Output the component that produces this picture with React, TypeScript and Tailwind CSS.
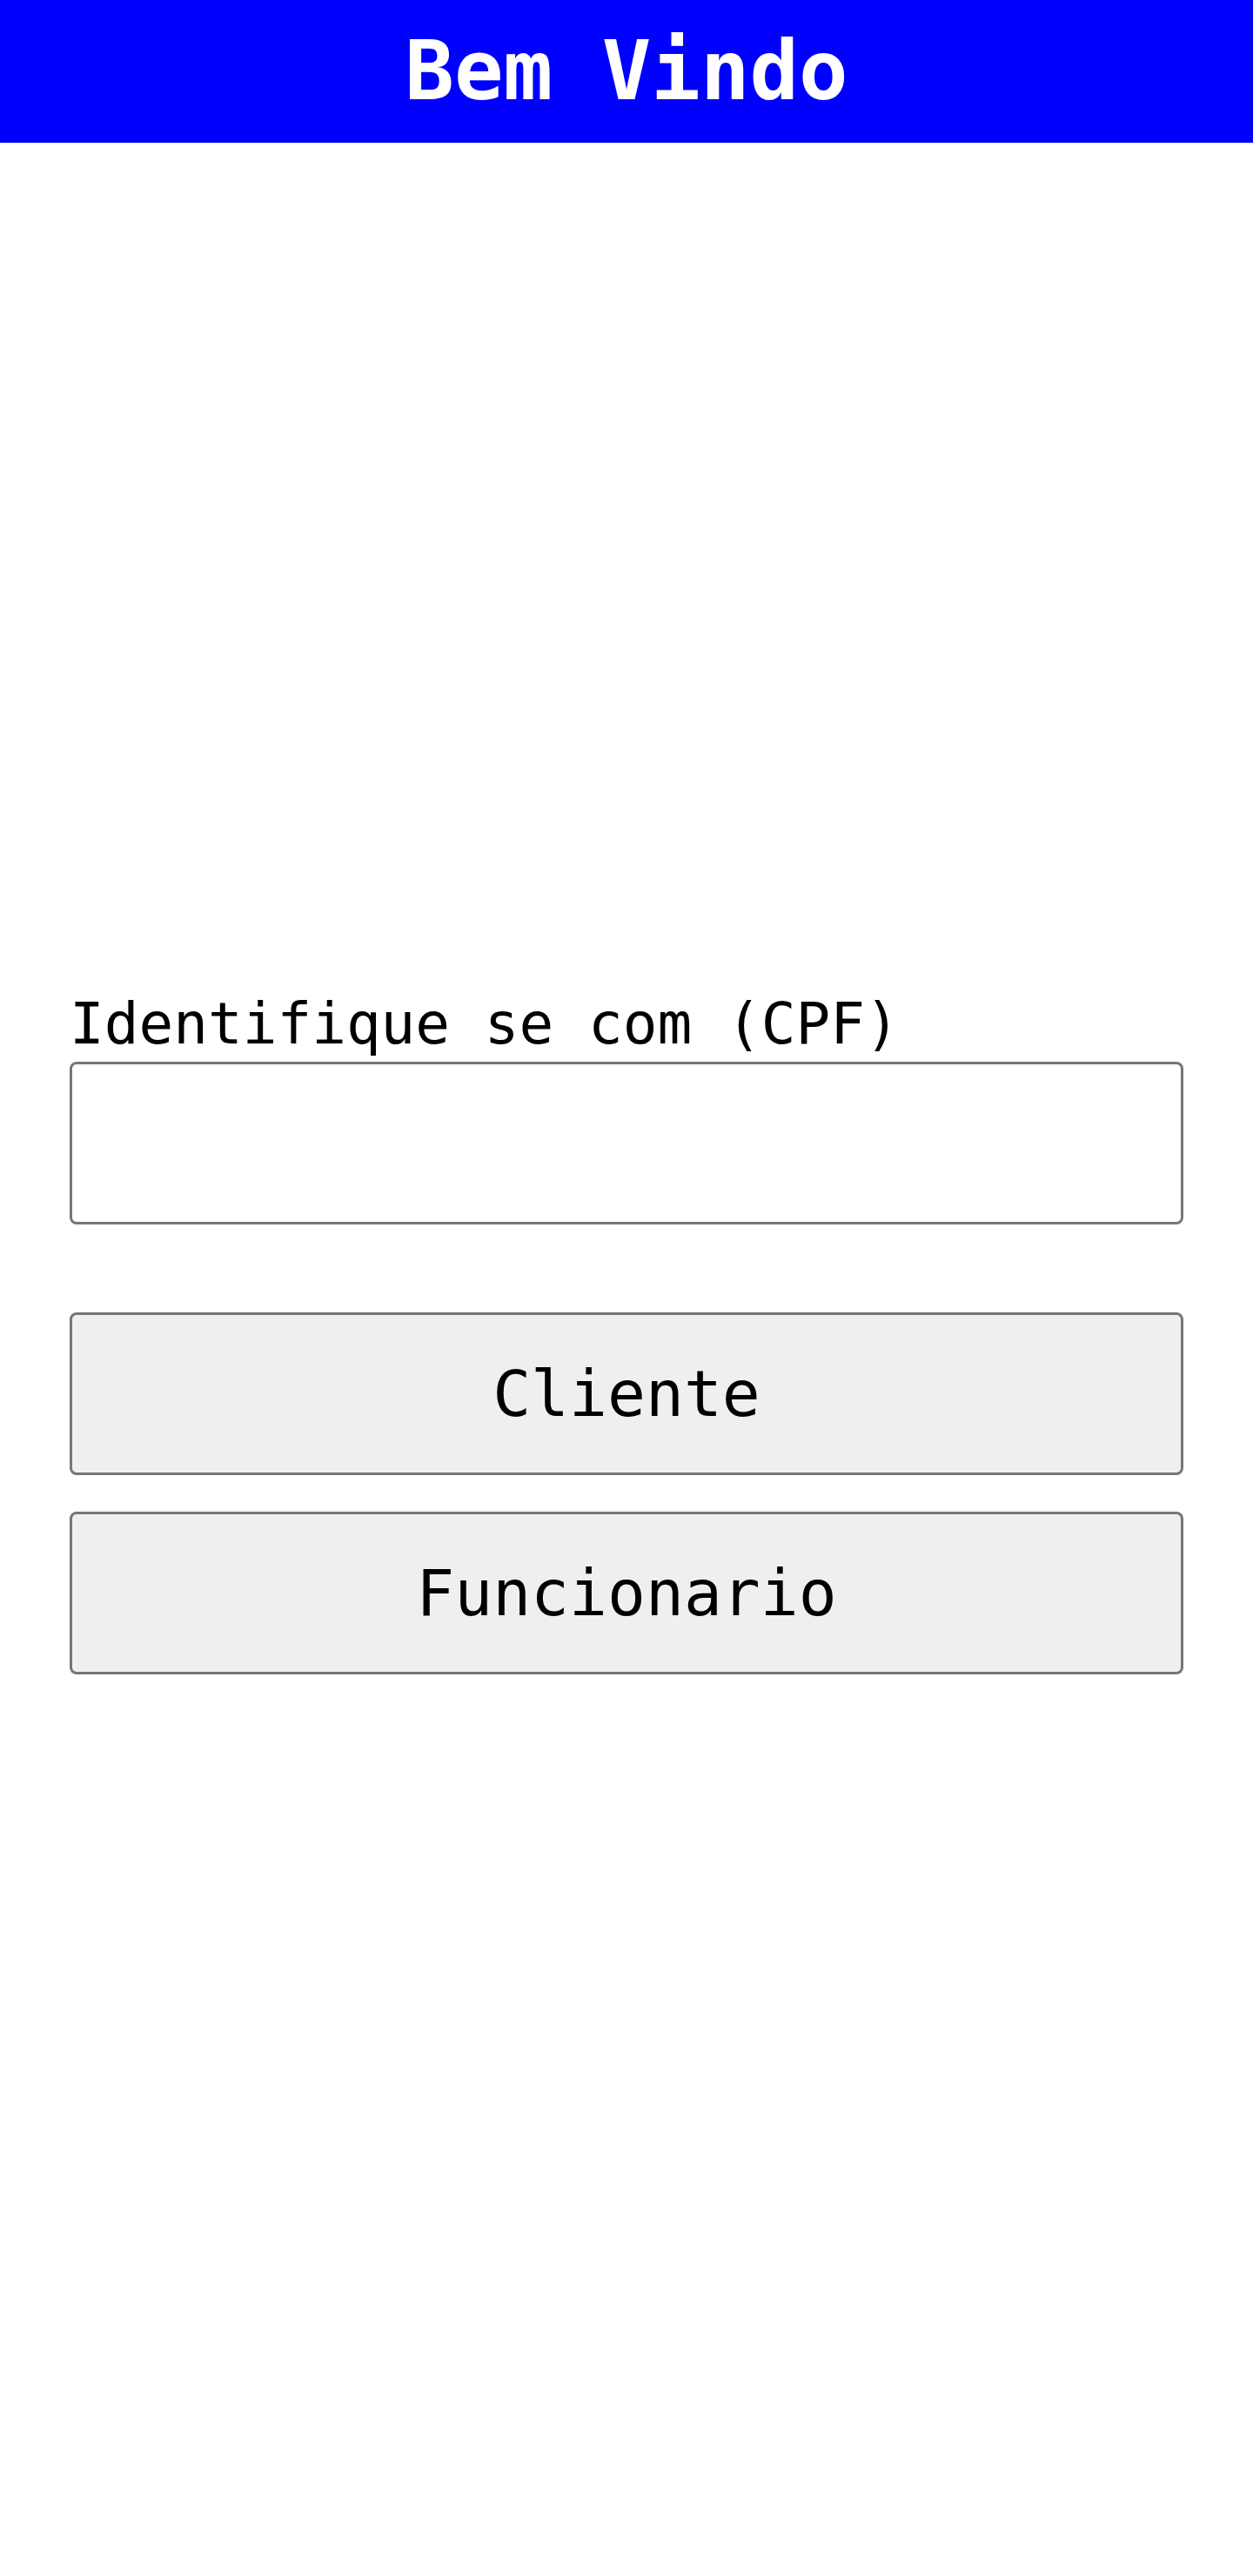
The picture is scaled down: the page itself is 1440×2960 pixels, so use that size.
import React from "react";

export default function App() {
  return (
    <div className="min-h-[2960px] w-full bg-white" style={{ fontFamily: '"DejaVu Sans Mono", monospace' }}>
      <header className="flex h-[164px] items-center justify-center bg-[#0000ff]">
        <h1 className="text-[94px] font-bold leading-none text-white">Bem Vindo</h1>
      </header>
      <main className="flex flex-col px-[80px] pt-[976px]">
        <label className="text-[66px] leading-[74px] text-black">Identifique se com (CPF)</label>
        <input
          type="text"
          className="mt-[6px] h-[187px] w-full rounded-[8px] border-[3px] border-[#767676] bg-white px-4 text-[64px] outline-none"
        />
        <button className="mt-[101px] h-[187px] w-full rounded-[8px] border-[3px] border-[#767676] bg-[#efefef] text-[73px] text-black">
          Cliente
        </button>
        <button className="mt-[42px] h-[187px] w-full rounded-[8px] border-[3px] border-[#767676] bg-[#efefef] text-[73px] text-black">
          Funcionario
        </button>
      </main>
    </div>
  );
}
